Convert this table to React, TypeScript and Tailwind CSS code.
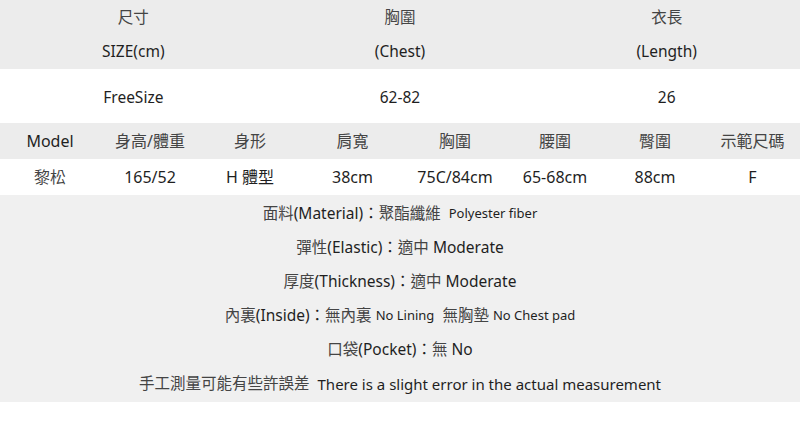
import React from "react";

const font = { fontFamily: '"Noto Sans", "Noto Sans CJK TC", sans-serif' };

export default function App() {
  const modelHead = ["Model", "身高/體重", "身形", "肩寬", "胸圍", "腰圍", "臀圍", "示範尺碼"];
  const modelData = ["黎松", "165/52", "H 體型", "38cm", "75C/84cm", "65-68cm", "88cm", "F"];
  const cols = "grid grid-cols-[100px_100px_100px_105px_100px_100px_100px_95px]";
  return (
    <div className="w-[800px] h-[438px] bg-white text-[#1f1f1f] overflow-hidden" style={font}>
      <div className="bg-[#ececec] h-[69px] grid grid-cols-3 grid-rows-[35px_34px] text-[15.5px]">
        <div className="flex items-center justify-center text-[#444]">尺寸</div>
        <div className="flex items-center justify-center text-[#444]">胸圍</div>
        <div className="flex items-center justify-center text-[#444]">衣長</div>
        <div className="flex items-center justify-center">SIZE(cm)</div>
        <div className="flex items-center justify-center">(Chest)</div>
        <div className="flex items-center justify-center">(Length)</div>
      </div>
      <div className="h-[54px] grid grid-cols-3 text-[15.5px] pt-[3px]">
        <div className="flex items-center justify-center">FreeSize</div>
        <div className="flex items-center justify-center">62-82</div>
        <div className="flex items-center justify-center">26</div>
      </div>
      <div className={`${cols} bg-[#ececec] h-[36px] text-[16px]`}>
        {modelHead.map((t, i) => (
          <div key={i} className={`flex items-center justify-center ${i === 0 ? "" : "text-[#444]"}`}>{t}</div>
        ))}
      </div>
      <div className={`${cols} h-[36px] text-[16px]`}>
        {modelData.map((t, i) => (
          <div key={i} className={`flex items-center justify-center ${i === 0 ? "text-[#444]" : ""}`}>{t}</div>
        ))}
      </div>
      <div className="bg-[#f0f0f0] h-[207px] pt-[2px] flex flex-col items-center text-[15.5px]">
        <div className="h-[34px] flex items-center">
          <span className="text-[#444]">面料</span>(Material)：<span className="text-[#444]">聚酯纖維</span>&nbsp;&nbsp;<span className="text-[13px]">Polyester fiber</span>
        </div>
        <div className="h-[34px] flex items-center">
          <span className="text-[#444]">彈性</span>(Elastic)：<span className="text-[#444]">適中</span>&nbsp;Moderate
        </div>
        <div className="h-[34px] flex items-center">
          <span className="text-[#444]">厚度</span>(Thickness)：<span className="text-[#444]">適中</span>&nbsp;Moderate
        </div>
        <div className="h-[34px] flex items-center">
          <span className="text-[#444]">內裏</span>(Inside)：<span className="text-[#444]">無內裏</span>&nbsp;<span className="text-[13px]">No Lining</span>&nbsp;&nbsp;<span className="text-[#444]">無胸墊</span>&nbsp;<span className="text-[13px]">No Chest pad</span>
        </div>
        <div className="h-[34px] flex items-center">
          <span className="text-[#444]">口袋</span>(Pocket)：<span className="text-[#444]">無</span>&nbsp;No
        </div>
        <div className="h-[34px] flex items-center">
          <span className="text-[#444]">手工測量可能有些許誤差</span>&nbsp;&nbsp;<span className="text-[15px]">There is a slight error in the actual measurement</span>
        </div>
      </div>
    </div>
  );
}
